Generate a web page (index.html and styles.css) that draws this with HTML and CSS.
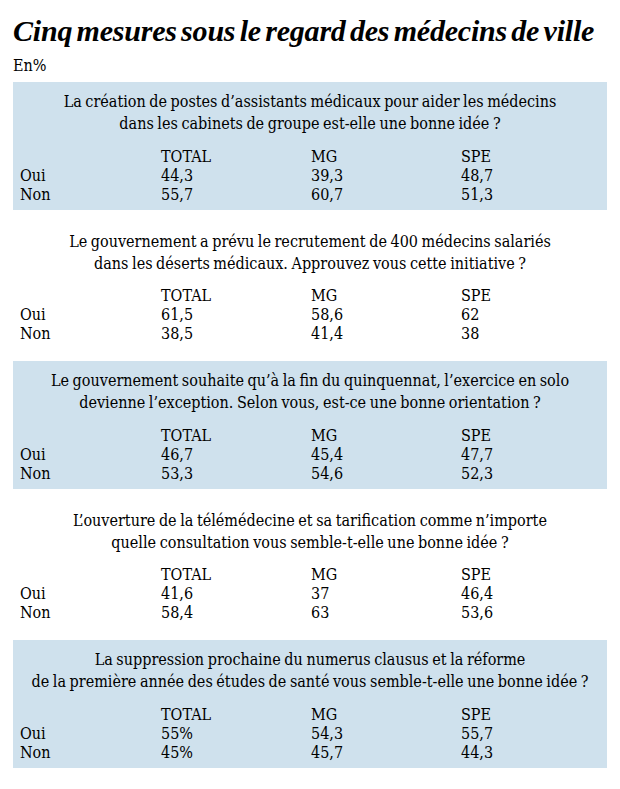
FILE: index.html
```html
<!DOCTYPE html>
<html lang="fr">
<head>
<meta charset="utf-8">
<link rel="stylesheet" href="styles.css">
</head>
<body>
<div class="page">
  <h1 class="title">Cinq mesures sous le regard des médecins de ville</h1>
  <div class="unit">En%</div>

  <section class="block blue">
    <p class="question">La création de postes d’assistants médicaux pour aider les médecins<br>dans les cabinets de groupe est-elle une bonne idée ?</p>
    <div class="grid">
      <span></span><span>TOTAL</span><span>MG</span><span>SPE</span>
      <span>Oui</span><span>44,3</span><span>39,3</span><span>48,7</span>
      <span>Non</span><span>55,7</span><span>60,7</span><span>51,3</span>
    </div>
  </section>

  <section class="block">
    <p class="question">Le gouvernement a prévu le recrutement de 400 médecins salariés<br>dans les déserts médicaux. Approuvez vous cette initiative ?</p>
    <div class="grid">
      <span></span><span>TOTAL</span><span>MG</span><span>SPE</span>
      <span>Oui</span><span>61,5</span><span>58,6</span><span>62</span>
      <span>Non</span><span>38,5</span><span>41,4</span><span>38</span>
    </div>
  </section>

  <section class="block blue">
    <p class="question">Le gouvernement souhaite qu’à la fin du quinquennat, l’exercice en solo<br>devienne l’exception. Selon vous, est-ce une bonne orientation ?</p>
    <div class="grid">
      <span></span><span>TOTAL</span><span>MG</span><span>SPE</span>
      <span>Oui</span><span>46,7</span><span>45,4</span><span>47,7</span>
      <span>Non</span><span>53,3</span><span>54,6</span><span>52,3</span>
    </div>
  </section>

  <section class="block">
    <p class="question">L’ouverture de la télémédecine et sa tarification comme n’importe<br>quelle consultation vous semble-t-elle une bonne idée ?</p>
    <div class="grid">
      <span></span><span>TOTAL</span><span>MG</span><span>SPE</span>
      <span>Oui</span><span>41,6</span><span>37</span><span>46,4</span>
      <span>Non</span><span>58,4</span><span>63</span><span>53,6</span>
    </div>
  </section>

  <section class="block blue">
    <p class="question">La suppression prochaine du numerus clausus et la réforme<br>de la première année des études de santé vous semble-t-elle une bonne idée ?</p>
    <div class="grid">
      <span></span><span>TOTAL</span><span>MG</span><span>SPE</span>
      <span>Oui</span><span>55%</span><span>54,3</span><span>55,7</span>
      <span>Non</span><span>45%</span><span>45,7</span><span>44,3</span>
    </div>
  </section>
</div>
</body>
</html>
```

FILE: styles.css
```css
html, body {
  margin: 0;
  padding: 0;
  background: #ffffff;
}

.page {
  width: 594px;
  padding: 0 13px;
  font-family: "DejaVu Serif", serif;
  font-stretch: condensed;
  color: #000000;
}

.title {
  margin: 0;
  padding-top: 13px;
  font-family: "Liberation Serif", serif;
  font-stretch: normal;
  font-size: 30px;
  line-height: 35px;
  font-weight: bold;
  font-style: italic;
  letter-spacing: -0.2px;
  word-spacing: -3px;
  white-space: nowrap;
}

.unit {
  margin-top: 9px;
  font-size: 16px;
  line-height: 18px;
  height: 25px;
  word-spacing: -2px;
}

.block {
  height: 128px;
  box-sizing: border-box;
  padding: 9px 0 0 7px;
  margin-bottom: 11.5px;
}

.block.blue {
  background: #cfe1ed;
}

.question {
  margin: 0;
  padding-right: 7px;
  text-align: center;
  font-size: 16px;
  line-height: 22px;
  word-spacing: -1px;
}

.grid {
  margin-top: 11.5px;
  display: grid;
  grid-template-columns: 141px 150px 150px 1fr;
  font-size: 16px;
  line-height: 19px;
}
```
